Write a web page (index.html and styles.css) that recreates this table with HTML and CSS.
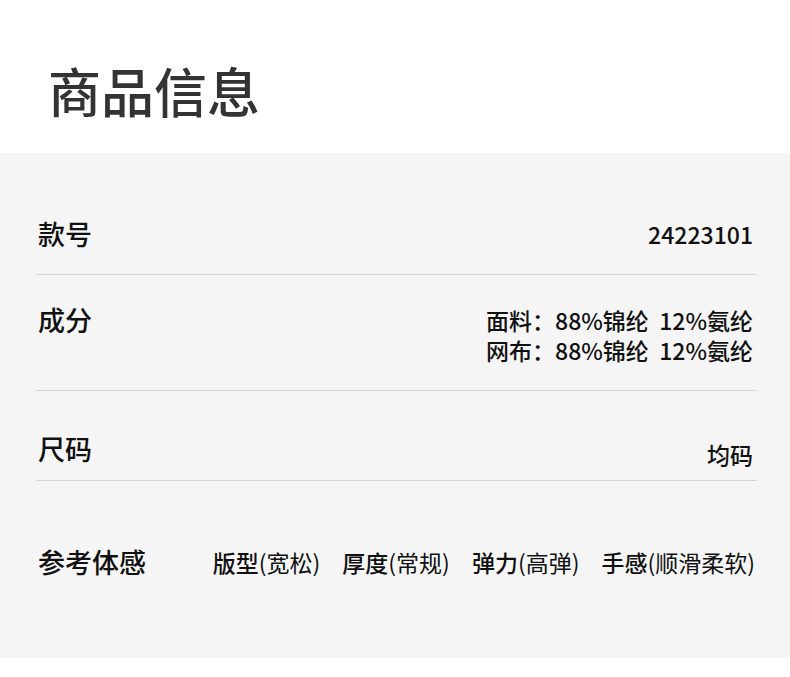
FILE: index.html
```html
<!DOCTYPE html>
<html lang="zh-CN">
<head>
<meta charset="utf-8">
<title>商品信息</title>
<link rel="stylesheet" href="styles.css">
</head>
<body>
<div class="page">
  <header class="head">
    <h1 class="title">商品信息</h1>
  </header>
  <section class="panel">
    <div class="row row-code">
      <div class="label">款号</div>
      <div class="value num">24223101</div>
    </div>
    <div class="row row-comp">
      <div class="label">成分</div>
      <div class="value multi">
        <div>面料：88%锦纶&nbsp;&nbsp;12%氨纶</div>
        <div>网布：88%锦纶&nbsp;&nbsp;12%氨纶</div>
      </div>
    </div>
    <div class="row row-size">
      <div class="label">尺码</div>
      <div class="value size">均码</div>
    </div>
    <div class="row row-feel">
      <div class="label">参考体感</div>
      <div class="tags">
        <span class="tag"><b>版型</b>(宽松)</span>
        <span class="tag"><b>厚度</b>(常规)</span>
        <span class="tag"><b>弹力</b>(高弹)</span>
        <span class="tag"><b>手感</b>(顺滑柔软)</span>
      </div>
    </div>
  </section>
</div>
</body>
</html>
```
FILE: styles.css
```css
* { box-sizing: border-box; }
html, body { margin: 0; padding: 0; background: #ffffff; }
body {
  font-family: "Noto Sans CJK SC", "Noto Sans", sans-serif;
  color: #111;
}
.page { width: 790px; }
.head {
  height: 153px;
  padding: 55px 0 0 48px;
}
.title {
  margin: 0;
  font-size: 53px;
  line-height: 70px;
  font-weight: 500;
  color: #333;
}
.panel {
  background: #f5f5f5;
  height: 505px;
  padding: 0 33px 0 36px;
}
.row {
  display: flex;
  justify-content: space-between;
  align-items: flex-start;
  padding: 0 4px 0 2px;
  border-bottom: 1px solid #d6d6d6;
}
.label {
  font-size: 27px;
  line-height: 36px;
  font-weight: 500;
  color: #111;
}
.value {
  font-size: 23px;
  line-height: 36px;
  font-weight: 500;
  color: #111;
  text-align: right;
}
.row-code { height: 122px; padding-top: 63px; }
.row-comp { height: 116px; padding-top: 27px; }
.multi { line-height: 30px; padding-top: 3px; }
.row-size { height: 90px; padding-top: 40px; }
.size { padding-top: 5px; }
.row-feel {
  border-bottom: none;
  padding-top: 63px;
}
.tags {
  display: flex;
  gap: 22px;
  font-size: 23px;
  line-height: 36px;
  padding-top: 0;
  margin-right: -2px;
}
.tag { font-weight: 400; }
.tag b { font-weight: 500; }
```
